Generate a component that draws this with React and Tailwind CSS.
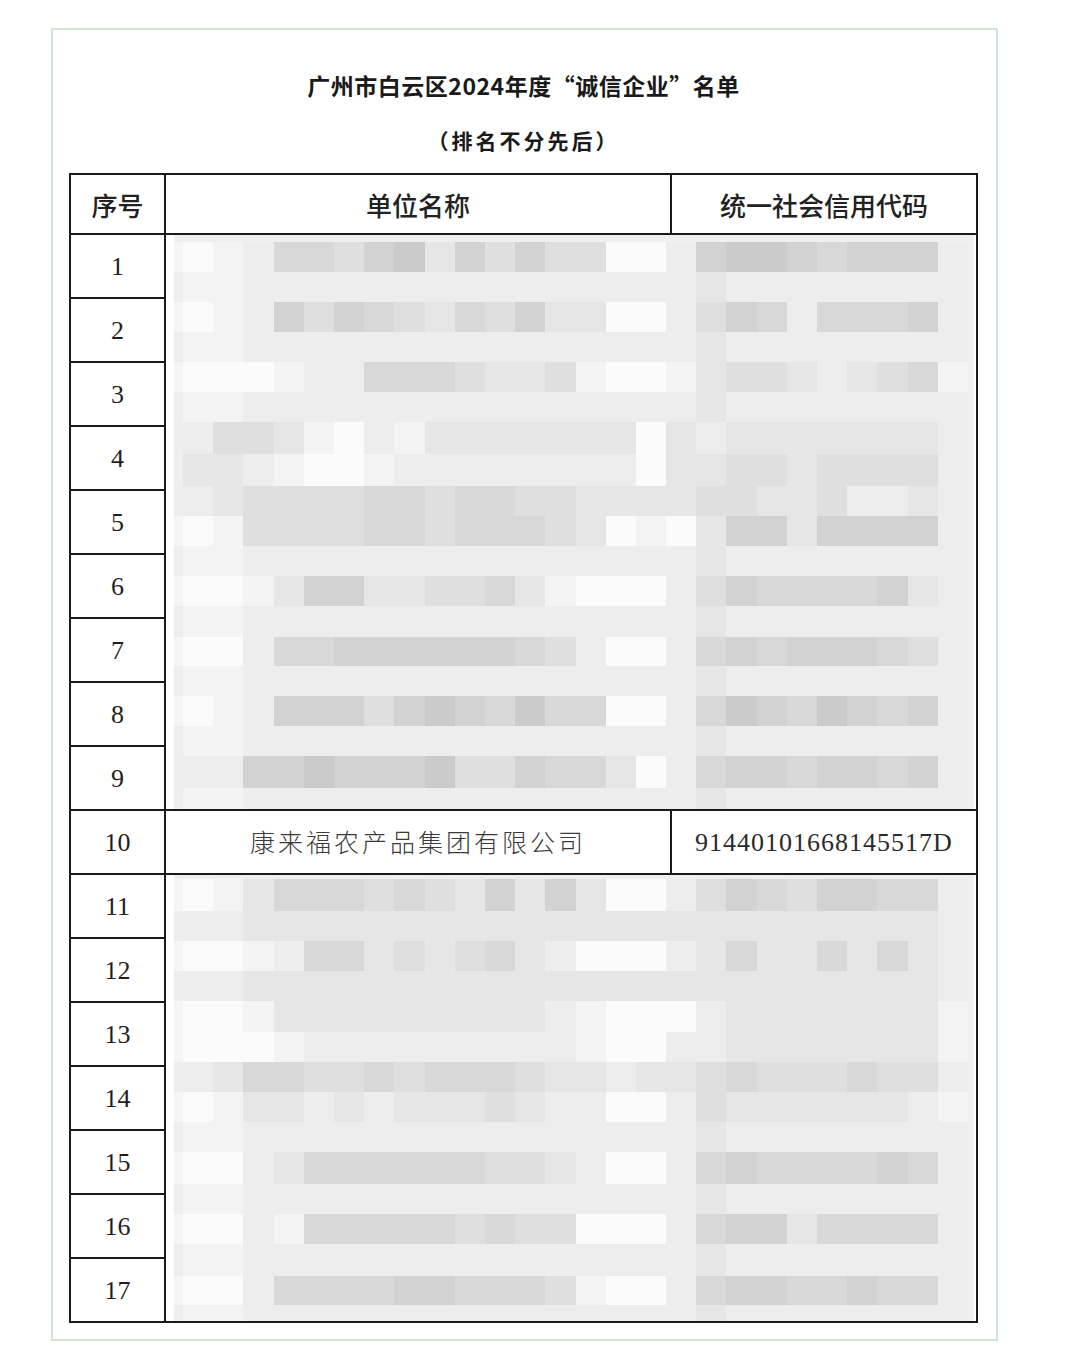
import React from 'react';

const SHADES = {
  '0': 'bg-[#fbfbfb]',
  '1': 'bg-[#f3f3f3]',
  '2': 'bg-[#ededed]',
  '3': 'bg-[#e6e6e6]',
  '4': 'bg-[#dfdfdf]',
  '5': 'bg-[#d8d8d8]',
  '6': 'bg-[#d2d2d2]',
  '7': 'bg-[#cbcbcb]',
};

const LIGHT = '11222222222222222322222222';
const LIGHT_B = '22333333333333333333333332';

// pixelated cover over rows 1-9
const bandsTop = [
  { h: 'h-[30px]', s: '01255467364644002677656662' },
  { h: 'h-[30px]', s: LIGHT },
  { h: 'h-[30px]', s: '01264654354633002465255562' },
  { h: 'h-[30px]', s: LIGHT },
  { h: 'h-[30px]', s: '00012255543341001344323451' },
  { h: 'h-[30px]', s: LIGHT },
  { h: 'h-[32px]', s: '24431021333333303233333332' },
  { h: 'h-[32px]', s: '33210012222222203344344442' },
  { h: 'h-[30px]', s: '23444455455443333443342232' },
  { h: 'h-[30px]', s: '01444455455543010366366662' },
  { h: 'h-[30px]', s: LIGHT },
  { h: 'h-[30px]', s: '00136633445310002465555632' },
  { h: 'h-[31px]', s: LIGHT },
  { h: 'h-[29px]', s: '00255666666542002565666542' },
  { h: 'h-[30px]', s: LIGHT },
  { h: 'h-[30px]', s: '01266646765755002576576562' },
  { h: 'h-[30px]', s: LIGHT },
  { h: 'h-[32px]', s: '22667666744655302566566562' },
  { h: 'h-[21px]', s: LIGHT },
];

// pixelated cover over rows 11-17
const bandsBottom = [
  { h: 'h-[32px]', s: '01355545436363002465466552' },
  { h: 'h-[30px]', s: LIGHT_B },
  { h: 'h-[30px]', s: '00125534345320002353353532' },
  { h: 'h-[30px]', s: LIGHT_B },
  { h: 'h-[31px]', s: '00133333333321000233333331' },
  { h: 'h-[30px]', s: '00012222222221002233333331' },
  { h: 'h-[30px]', s: '23554454555433233454445442' },
  { h: 'h-[30px]', s: '01332323334322002433333321' },
  { h: 'h-[30px]', s: LIGHT },
  { h: 'h-[32px]', s: '00235555554432002565555652' },
  { h: 'h-[30px]', s: LIGHT },
  { h: 'h-[30px]', s: '00215555545440002566355552' },
  { h: 'h-[32px]', s: LIGHT },
  { h: 'h-[29px]', s: '00255556655541002566556552' },
  { h: 'h-[16px]', s: LIGHT },
];

const zh = "font-['Noto_Sans_CJK_SC',sans-serif]";
const serif = "font-['Liberation_Serif',serif]";

function Mosaic({ bands, top, span }) {
  return (
    <div className={`${span} col-span-2 flex flex-col border-b-2 border-[#1a1a1a] bg-white pl-[8px] pr-[2px]`}>
      <div className={`${top} bg-[#efefef]`} />
      {bands.map((b, i) => (
        <div key={i} className={`${b.h} grid grid-cols-[9px_repeat(26,minmax(0,1fr))_6px]`}>
          <div className={b.s[0] === '0' ? 'bg-[#f5f5f5]' : 'bg-[#eeeeee]'} />
          {b.s.split('').map((c, j) => (
            <div key={j} className={SHADES[c]} />
          ))}
          <div className="bg-[#f0f0f0]" />
        </div>
      ))}
    </div>
  );
}

function NumCell({ n }) {
  return (
    <div className={`h-[64px] flex items-center justify-center border-r-2 border-b-2 border-[#1a1a1a] ${serif} text-[26px] text-[#1f1f1f]`}>
      {n}
    </div>
  );
}

export default function App() {
  return (
    <div className="min-h-[1369px] bg-white pt-[28px] pl-[51px]">
      <div className="w-[947px] border-2 border-[#d3e4d4] bg-white pt-[39px] pl-[16px] pb-[16px]">
        <div className="w-[909px] flex flex-col items-center">
          <h1 className={`${zh} text-[23px] leading-[32px] font-bold tracking-[0.5px] text-[#1a1a1a]`}>
            广州市白云区2024年度“诚信企业”名单
          </h1>
          <p className={`${zh} mt-[23px] text-[21px] leading-[32px] font-bold tracking-[3px] text-[#1a1a1a]`}>
            （排名不分先后）
          </p>
        </div>

        <div className="mt-[17px] w-[909px] grid grid-cols-[95px_506px_304px] border-t-2 border-l-2 border-r-2 border-[#1a1a1a]">
          <div className={`h-[60px] flex items-center justify-center border-r-2 border-b-2 border-[#1a1a1a] ${zh} text-[26px] font-medium text-[#222]`}>
            序号
          </div>
          <div className={`h-[60px] flex items-center justify-center border-r-2 border-b-2 border-[#1a1a1a] ${zh} text-[26px] font-medium text-[#222]`}>
            单位名称
          </div>
          <div className={`h-[60px] flex items-center justify-center border-b-2 border-[#1a1a1a] ${zh} text-[26px] font-medium text-[#222]`}>
            统一社会信用代码
          </div>

          <NumCell n={1} />
          <Mosaic bands={bandsTop} top="h-[7px]" span="row-span-9" />
          {[2, 3, 4, 5, 6, 7, 8, 9].map((n) => (
            <NumCell key={n} n={n} />
          ))}

          <NumCell n={10} />
          <div className={`h-[64px] flex items-center justify-center border-r-2 border-b-2 border-[#1a1a1a] ${zh} text-[25px] font-light tracking-[3px] text-[#3a3a3a]`}>
            康来福农产品集团有限公司
          </div>
          <div className={`h-[64px] flex items-center justify-center border-b-2 border-[#1a1a1a] ${serif} text-[26px] tracking-[1px] text-[#2a2a2a]`}>
            91440101668145517D
          </div>

          <NumCell n={11} />
          <Mosaic bands={bandsBottom} top="h-[4px]" span="row-span-7" />
          {[12, 13, 14, 15, 16, 17].map((n) => (
            <NumCell key={n} n={n} />
          ))}
        </div>
      </div>
    </div>
  );
}
